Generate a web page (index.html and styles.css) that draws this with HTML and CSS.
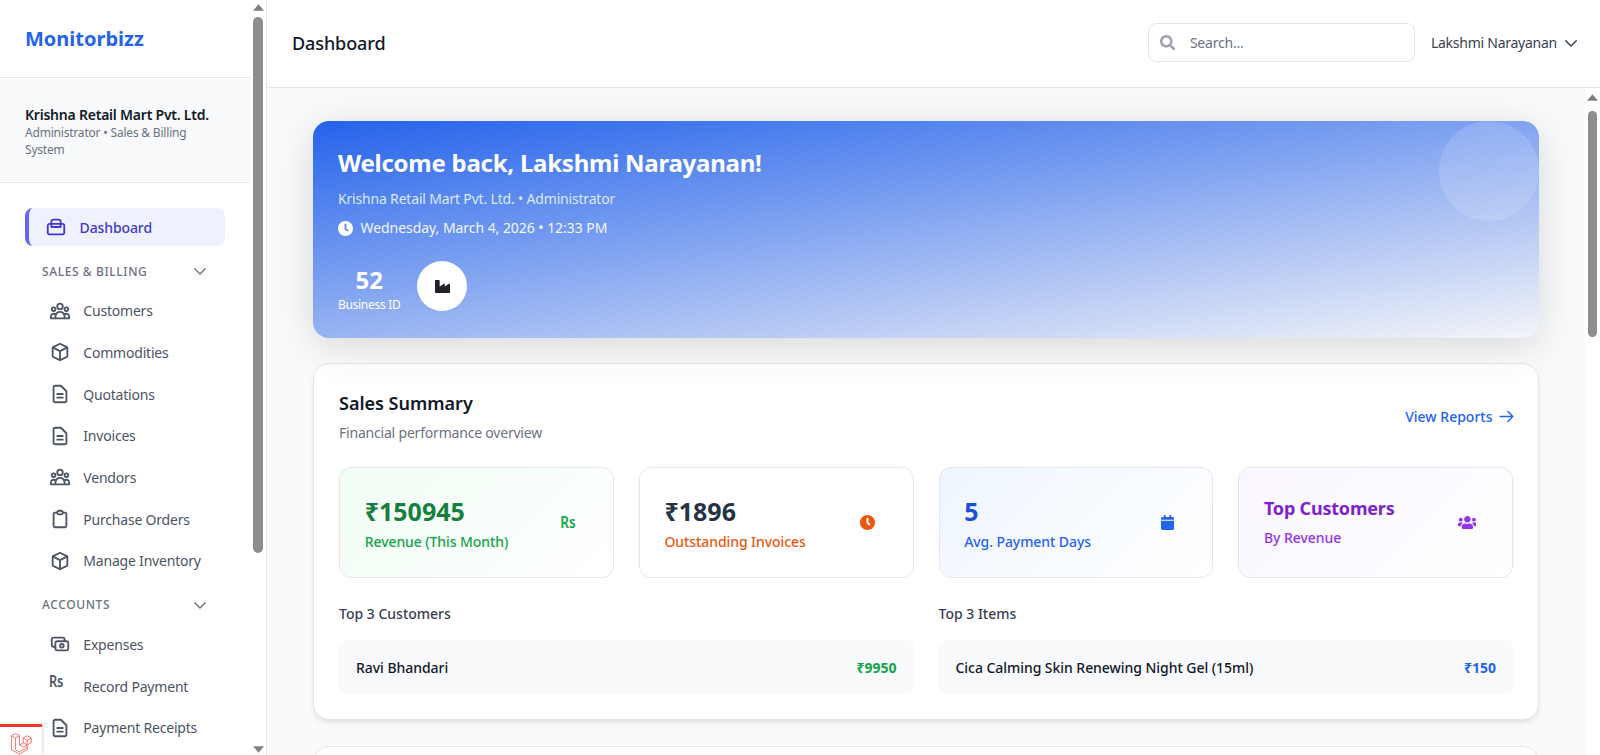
FILE: index.html
```html
<!DOCTYPE html>
<html lang="en">
<head>
<meta charset="utf-8">
<title>Dashboard</title>
<link rel="stylesheet" href="styles.css">
</head>
<body>
<div class="app">
  <aside class="sidebar">
    <div class="sidebar-body">
      <div class="brand"><span class="brand-name">Monitorbizz</span></div>
      <div class="org">
        <div class="org-name">Krishna Retail Mart Pvt. Ltd.</div>
        <div class="org-role">Administrator • Sales &amp; Billing System</div>
      </div>
      <nav class="nav">
        <a class="nav-active">
          <svg class="ico-active" viewBox="0 0 24 24"><path d="M3 10.500a2 2 0 012-2h14a2 2 0 012 2V18a2 2 0 01-2 2H5a2 2 0 01-2-2zM7 8.500V6a2 2 0 012-2h6a2 2 0 012 2v2.500M7 8.500V12h10V8.500"/></svg>
          <span>Dashboard</span>
        </a>
        <div class="nav-group"><span>SALES &amp; BILLING</span><svg class="chev" viewBox="0 0 24 24"><path d="M19 9l-7 7-7-7"/></svg></div>
        <a class="nav-item"><svg class="ico" viewBox="0 0 24 24"><path d="M17 20h5v-2a3 3 0 00-5.356-1.857M17 20H7m10 0v-2c0-.656-.126-1.283-.356-1.857M7 20H2v-2a3 3 0 015.356-1.857M7 20v-2c0-.656.126-1.283.356-1.857m0 0a5.002 5.002 0 019.288 0M15 7a3 3 0 11-6 0 3 3 0 016 0zm6 3a2 2 0 11-4 0 2 2 0 014 0zM7 10a2 2 0 11-4 0 2 2 0 014 0z"/></svg><span>Customers</span></a>
        <a class="nav-item"><svg class="ico" viewBox="0 0 24 24"><path d="M20 7l-8-4-8 4m16 0l-8 4m8-4v10l-8 4m0-10L4 7m8 4v10M4 7v10l8 4"/></svg><span>Commodities</span></a>
        <a class="nav-item"><svg class="ico" viewBox="0 0 24 24"><path d="M9 12h6m-6 4h6m2 5H7a2 2 0 01-2-2V5a2 2 0 012-2h5.586a1 1 0 01.707.293l5.414 5.414a1 1 0 01.293.707V19a2 2 0 01-2 2z"/></svg><span>Quotations</span></a>
        <a class="nav-item"><svg class="ico" viewBox="0 0 24 24"><path d="M9 12h6m-6 4h6m2 5H7a2 2 0 01-2-2V5a2 2 0 012-2h5.586a1 1 0 01.707.293l5.414 5.414a1 1 0 01.293.707V19a2 2 0 01-2 2z"/></svg><span>Invoices</span></a>
        <a class="nav-item"><svg class="ico" viewBox="0 0 24 24"><path d="M17 20h5v-2a3 3 0 00-5.356-1.857M17 20H7m10 0v-2c0-.656-.126-1.283-.356-1.857M7 20H2v-2a3 3 0 015.356-1.857M7 20v-2c0-.656.126-1.283.356-1.857m0 0a5.002 5.002 0 019.288 0M15 7a3 3 0 11-6 0 3 3 0 016 0zm6 3a2 2 0 11-4 0 2 2 0 014 0zM7 10a2 2 0 11-4 0 2 2 0 014 0z"/></svg><span>Vendors</span></a>
        <a class="nav-item"><svg class="ico" viewBox="0 0 24 24"><path d="M9 5H7a2 2 0 00-2 2v12a2 2 0 002 2h10a2 2 0 002-2V7a2 2 0 00-2-2h-2M9 5a2 2 0 002 2h2a2 2 0 002-2M9 5a2 2 0 012-2h2a2 2 0 012 2"/></svg><span>Purchase Orders</span></a>
        <a class="nav-item"><svg class="ico" viewBox="0 0 24 24"><path d="M20 7l-8-4-8 4m16 0l-8 4m8-4v10l-8 4m0-10L4 7m8 4v10M4 7v10l8 4"/></svg><span>Manage Inventory</span></a>
        <div class="nav-group"><span>ACCOUNTS</span><svg class="chev" viewBox="0 0 24 24"><path d="M19 9l-7 7-7-7"/></svg></div>
        <a class="nav-item"><svg class="ico" viewBox="0 0 24 24"><path d="M17 9V7a2 2 0 00-2-2H5a2 2 0 00-2 2v6a2 2 0 002 2h2m2 4h10a2 2 0 002-2v-6a2 2 0 00-2-2H9a2 2 0 00-2 2v6a2 2 0 002 2zm7-5a2 2 0 11-4 0 2 2 0 014 0z"/></svg><span>Expenses</span></a>
        <a class="nav-item"><span class="ico-box"><span class="ico-rs">Rs</span></span><span>Record Payment</span></a>
        <a class="nav-item"><svg class="ico" viewBox="0 0 24 24"><path d="M9 12h6m-6 4h6m2 5H7a2 2 0 01-2-2V5a2 2 0 012-2h5.586a1 1 0 01.707.293l5.414 5.414a1 1 0 01.293.707V19a2 2 0 01-2 2z"/></svg><span>Payment Receipts</span></a>
      </nav>
    </div>
    <div class="sb sb-side">
      <svg class="sb-arrow sb-arrow-top" viewBox="0 0 10 6"><path d="M5 0L10 6H0z"/></svg>
      <div class="sb-thumb sb-thumb-side"></div>
      <svg class="sb-arrow sb-arrow-bottom" viewBox="0 0 10 6"><path d="M0 0H10L5 6z"/></svg>
    </div>
  </aside>
  <div class="main">
    <header class="topbar">
      <h1 class="page-title">Dashboard</h1>
      <div class="top-right">
        <label class="search">
          <svg class="search-ico" viewBox="0 0 512 512"><path d="M505 442.7L405.3 343c-4.500-4.500-10.600-7-17-7H372c27.600-35.300 44-79.700 44-128C416 93.100 322.900 0 208 0S0 93.100 0 208s93.100 208 208 208c48.300 0 92.700-16.400 128-44v16.300c0 6.400 2.500 12.500 7 17l99.700 99.700c9.400 9.400 24.600 9.400 33.900 0l28.300-28.300c9.400-9.400 9.400-24.600.1-34zM208 336c-70.700 0-128-57.200-128-128 0-70.700 57.200-128 128-128 70.700 0 128 57.200 128 128 0 70.700-57.200 128-128 128z"/></svg>
          <span class="search-ph">Search...</span>
        </label>
        <div class="user"><span>Lakshmi Narayanan</span><svg class="user-chev" viewBox="0 0 24 24"><path d="M19 9l-7 7-7-7"/></svg></div>
      </div>
    </header>
    <div class="content-row">
      <main class="content">
        <section class="hero">
          <div class="hero-circle"></div>
          <h2 class="hero-title">Welcome back, Lakshmi Narayanan!</h2>
          <p class="hero-sub">Krishna Retail Mart Pvt. Ltd. • Administrator</p>
          <p class="hero-date"><svg class="hero-clock" viewBox="8 8 496 496"><path d="M256,8C119,8,8,119,8,256S119,504,256,504,504,393,504,256,393,8,256,8Zm92.490,313h0l-20,25a16,16,0,0,1-22.490,2.500h0l-67-49.720a40,40,0,0,1-15-31.230V112a16,16,0,0,1,16-16h32a16,16,0,0,1,16,16V256l58,42.500A16,16,0,0,1,348.490,321Z"/></svg><span>Wednesday, March 4, 2026 • 12:33 PM</span></p>
          <div class="hero-stats">
            <div class="hero-id"><div class="hero-num">52</div><div class="hero-label">Business ID</div></div>
            <div class="hero-badge"><svg class="hero-factory" viewBox="0 0 512 512"><path d="M475.115 163.781L336 252.309v-68.280c0-18.916-20.931-30.399-36.885-20.248L160 252.309V56c0-13.255-10.745-24-24-24H24C10.745 32 0 42.745 0 56v400c0 13.255 10.745 24 24 24h464c13.255 0 24-10.745 24-24V184.029c0-18.917-20.931-30.399-36.885-20.248z"/></svg></div>
          </div>
        </section>
        <section class="card">
          <div class="card-head">
            <div>
              <h3 class="card-title">Sales Summary</h3>
              <p class="card-sub">Financial performance overview</p>
            </div>
            <a class="card-link"><span>View Reports</span><svg class="arrow" viewBox="0 0 24 24"><path d="M14 5l7 7m0 0l-7 7m7-7H3"/></svg></a>
          </div>
          <div class="stats">
            <div class="stat stat-green">
              <div class="stat-text"><div class="stat-value c-green-dark">₹150945</div><div class="stat-label c-green">Revenue (This Month)</div></div>
              <div class="stat-icon"><span class="stat-rs c-green">Rs</span></div>
            </div>
            <div class="stat stat-white">
              <div class="stat-text"><div class="stat-value c-slate">₹1896</div><div class="stat-label c-orange">Outstanding Invoices</div></div>
              <div class="stat-icon"><svg class="ico-clock c-orange" viewBox="8 8 496 496"><path d="M256,8C119,8,8,119,8,256S119,504,256,504,504,393,504,256,393,8,256,8Zm92.490,313h0l-20,25a16,16,0,0,1-22.490,2.500h0l-67-49.720a40,40,0,0,1-15-31.230V112a16,16,0,0,1,16-16h32a16,16,0,0,1,16,16V256l58,42.500A16,16,0,0,1,348.490,321Z"/></svg></div>
            </div>
            <div class="stat stat-blue">
              <div class="stat-text"><div class="stat-value c-blue-dark">5</div><div class="stat-label c-blue">Avg. Payment Days</div></div>
              <div class="stat-icon"><svg class="ico-cal c-blue" viewBox="0 0 448 512"><path d="M12 192h424c6.600 0 12 5.400 12 12v260c0 26.500-21.500 48-48 48H48c-26.500 0-48-21.500-48-48V204c0-6.600 5.400-12 12-12zm436-44v-36c0-26.500-21.500-48-48-48h-48V12c0-6.600-5.400-12-12-12h-40c-6.600 0-12 5.400-12 12v52H160V12c0-6.600-5.400-12-12-12h-40c-6.600 0-12 5.400-12 12v52H48C21.500 64 0 85.500 0 112v36c0 6.600 5.400 12 12 12h424c6.600 0 12-5.400 12-12z"/></svg></div>
            </div>
            <div class="stat stat-purple">
              <div class="stat-text-alt"><div class="stat-title c-purple-dark">Top Customers</div><div class="stat-label2 c-purple">By Revenue</div></div>
              <div class="stat-icon"><svg class="ico-users c-purple" viewBox="0 0 640 512"><path d="M96 224c35.300 0 64-28.700 64-64s-28.700-64-64-64-64 28.700-64 64 28.700 64 64 64zm448 0c35.300 0 64-28.700 64-64s-28.700-64-64-64-64 28.700-64 64 28.700 64 64 64zm32 32h-64c-17.600 0-33.500 7.100-45.100 18.600 40.300 22.100 68.900 62 75.100 109.400h66c17.700 0 32-14.300 32-32v-32c0-35.300-28.700-64-64-64zm-256 0c61.900 0 112-50.100 112-112S381.900 32 320 32 208 82.100 208 144s50.100 112 112 112zm76.800 32h-8.300c-20.800 10-43.900 16-68.500 16s-47.600-6-68.500-16h-8.300C179.600 288 128 339.600 128 403.200V432c0 26.500 21.500 48 48 48h288c26.500 0 48-21.500 48-48v-28.800c0-63.600-51.600-115.200-115.200-115.200zm-223.700-13.400C161.500 263.100 145.600 256 128 256H64c-35.300 0-64 28.700-64 64v32c0 17.700 14.300 32 32 32h65.900c6.300-47.400 34.900-87.300 75.200-109.400z"/></svg></div>
            </div>
          </div>
          <div class="tops">
            <div>
              <h4 class="top-title">Top 3 Customers</h4>
              <div class="top-row"><span>Ravi Bhandari</span><span class="top-val c-green">₹9950</span></div>
            </div>
            <div>
              <h4 class="top-title">Top 3 Items</h4>
              <div class="top-row"><span>Cica Calming Skin Renewing Night Gel (15ml)</span><span class="top-val c-blue">₹150</span></div>
            </div>
          </div>
        </section>
        <section class="card card-next"></section>
      </main>
      <div class="sb sb-main">
        <svg class="sb-arrow sb-arrow-main" viewBox="0 0 10 6"><path d="M5 0L10 6H0z"/></svg>
        <div class="sb-thumb sb-thumb-main"></div>
      </div>
    </div>
  </div>
</div>
<div class="debug-tab">
  <svg class="debug-logo" viewBox="0 0 50 52"><path d="M1 6.300L10.600 .8l9.600 5.500v22l8.800-5V11.800l9.600-5.500 9.600 5.500v11l-9.400 5.400v11l-19 11L1 39.300zM1 6.300l9.600 5.500 9.600-5.500M10.600 11.800v27.500l9.200 5.400 19.200-11M20.200 28.300l9.200 5.200 9.200-5.300M29 11.800l9.600 5.500 9.600-5.500M38.600 17.300v10.900M29 22.800l9.600 5.400"/></svg>
</div>
</body>
</html>
```

FILE: styles.css
```css
* { box-sizing: border-box; }
html, body { margin: 0; height: 100%; overflow: hidden; }
body { font-family: "Noto Sans", "Open Sans", sans-serif; color: #111827; background: #fff; letter-spacing: -.2px; }
h1, h2, h3, h4, p { margin: 0; font-weight: inherit; font-size: inherit; }
a { color: inherit; text-decoration: none; }
svg { display: block; flex: none; }

.app { display: flex; height: 755px; }

.sb { flex: none; display: flex; flex-direction: column; align-items: center; background: #fff; }
.sb-side { width: 16px; }
.sb-main { width: 15px; }
.sb-arrow { width: 11px; height: 7px; fill: #808080; }
.sb-arrow-top { margin-top: 3.500px; }
.sb-arrow-bottom { margin-top: auto; margin-bottom: 2px; }
.sb-arrow-main { margin-top: 5.500px; }
.sb-thumb { width: 9.500px; background: #8e8e8e; border-radius: 5px; }
.sb-thumb-side { height: 536px; margin-top: 6.500px; }
.sb-thumb-main { height: 226px; margin-top: 10.500px; }

.sidebar { width: 267px; flex: none; display: flex; border-right: 1px solid #e5e7eb; background: #fff; }
.sidebar-body { flex: 1; min-width: 0; overflow: hidden; }
.brand { height: 78px; padding: 0 25px; display: flex; align-items: center; border-bottom: 1px solid #e5e7eb; }
.brand-name { font-size: 20px; font-weight: 700; color: #2563eb; letter-spacing: 0; }
.org { background: #f9fafb; padding: 27px 25px 23px; height: 105px; border-bottom: 1px solid #e5e7eb; }
.org-name { font-size: 14px; font-weight: 600; color: #111827; line-height: 20px; letter-spacing: -.22px; }
.org-role { font-size: 12px; color: #6b7280; line-height: 17px; margin-top: -1px; }
.nav { padding: 25px 25px 0; }
.nav-active { display: flex; align-items: center; gap: 12.500px; height: 38px; width: 200px; padding-left: 16px; background: #eef2ff; border-left: 4px solid #6366f1; border-radius: 8px; color: #4338ca; font-size: 14px; font-weight: 500; letter-spacing: -.1px; margin-bottom: 4px; }
.ico-active { width: 22px; height: 22px; fill: none; stroke: #4338ca; stroke-width: 2; stroke-linecap: round; stroke-linejoin: round; }
.nav-group { display: flex; justify-content: space-between; align-items: center; height: 40px; margin-top: 2px; padding: 2px 16px 0 17px; width: 200px; font-size: 12px; font-weight: 500; letter-spacing: .6px; color: #6b7280; }
.chev { width: 18px; height: 18px; fill: none; stroke: #6b7280; stroke-width: 1.800; stroke-linecap: round; stroke-linejoin: round; }
.nav-item { display: flex; align-items: center; gap: 12px; height: 41.670px; padding-left: 24.300px; font-size: 14px; color: #4b5563; }
.ico { width: 22px; height: 22px; fill: none; stroke: #4b5563; stroke-width: 2; stroke-linecap: round; stroke-linejoin: round; }
.ico-box { width: 22px; flex: none; display: flex; }
.ico-rs { display: block; font-size: 16px; line-height: 16px; font-weight: 600; color: #4b5563; transform: translateY(-5px) scaleX(.8); transform-origin: left center; }

.main { flex: 1; min-width: 0; display: flex; flex-direction: column; background: #f9fafb; }
.topbar { height: 88px; flex: none; background: #fff; border-bottom: 1px solid #e5e7eb; display: flex; align-items: center; justify-content: space-between; padding: 0 20px 2px 25px; }
.page-title { font-size: 18px; font-weight: 500; color: #111827; letter-spacing: -.1px; }
.top-right { display: flex; align-items: center; gap: 16px; }
.search { width: 267px; height: 39px; display: flex; align-items: center; gap: 14.500px; padding-left: 11px; background: #fff; border: 1px solid #e5e7eb; border-radius: 8px; }
.search-ico { width: 15.500px; height: 15.500px; fill: #9ca3af; }
.search-ph { font-size: 14px; color: #6b7280; }
.user { display: flex; align-items: center; gap: 5px; font-size: 14px; color: #374151; letter-spacing: -.25px; }
.user-chev { width: 18px; height: 18px; fill: none; stroke: #374151; stroke-width: 2; stroke-linecap: round; stroke-linejoin: round; }

.content-row { flex: 1; min-height: 0; display: flex; }
.content { flex: 1; min-width: 0; overflow: hidden; padding: 33px 46px 24px; background: #f9fafb; }
.hero { position: relative; height: 217px; padding: 24px 25px; border-radius: 16px; color: #fff; background: linear-gradient(172deg, #2563eb 0%, #f3f4f8 100%); box-shadow: 0 8px 40px rgba(0,0,0,.14); overflow: hidden; }
.hero-circle { position: absolute; top: 0; right: 0; width: 100px; height: 100px; border-radius: 50%; background: rgba(255,255,255,.14); }
.hero-title { font-size: 24px; font-weight: 700; line-height: 36px; letter-spacing: -.25px; }
.hero-sub { font-size: 14px; color: #dbeafe; line-height: 20px; margin-top: 8px; letter-spacing: -.18px; }
.hero-date { display: flex; align-items: center; gap: 7.500px; font-size: 14px; line-height: 20px; margin-top: 9px; color: #f3f6fe; letter-spacing: -.05px; }
.hero-clock { width: 15px; height: 15px; fill: #fff; }
.hero-stats { display: flex; align-items: flex-start; gap: 17px; margin-top: 23px; }
.hero-id { text-align: center; padding-top: 3px; }
.hero-num { font-size: 24px; font-weight: 700; line-height: 32px; letter-spacing: 0; }
.hero-label { font-size: 12px; line-height: 16px; letter-spacing: -.3px; margin-top: 1px; }
.hero-badge { width: 50px; height: 50px; border-radius: 50%; background: #fff; display: flex; align-items: center; justify-content: center; }
.hero-factory { width: 15px; height: 15px; fill: #1f2328; }

.card { margin-top: 25px; background: #fff; border: 1px solid #e5e7eb; border-radius: 16px; padding: 25px; box-shadow: 0 4px 6px -1px rgba(0,0,0,.08), 0 2px 4px -1px rgba(0,0,0,.04); }
.card-head { display: flex; justify-content: space-between; align-items: center; }
.card-title { font-size: 18px; font-weight: 600; color: #111827; line-height: 28px; letter-spacing: 0; }
.card-sub { font-size: 14px; color: #6b7280; line-height: 20px; margin-top: 6px; }
.card-link { display: flex; align-items: center; gap: 5px; margin-right: -1.500px; font-size: 14px; font-weight: 500; color: #2563eb; letter-spacing: 0; }
.arrow { width: 17px; height: 17px; fill: none; stroke: #2563eb; stroke-width: 2; stroke-linecap: round; stroke-linejoin: round; }
.stats { display: grid; grid-template-columns: repeat(4, 1fr); gap: 25px; margin-top: 24px; }
.stat { height: 110.500px; display: flex; align-items: center; justify-content: space-between; padding: 0 25px 0 24.700px; border: 1px solid #e5e7eb; border-radius: 12px; }
.stat-text { padding-top: 3px; }
.stat-text-alt { padding-bottom: 2px; }
.stat-icon { width: 40px; flex: none; display: flex; align-items: center; justify-content: center; }
.stat-green { background: linear-gradient(135deg, #f0fdf4, #fff); }
.stat-white { background: #fff; }
.stat-blue { background: linear-gradient(135deg, #eff6ff, #fff); }
.stat-purple { background: linear-gradient(135deg, #faf5ff, #fff); }
.stat-value { font-size: 25px; font-weight: 700; line-height: 32px; letter-spacing: 0; }
.stat-label { font-size: 14px; font-weight: 500; line-height: 20px; margin-top: 5px; letter-spacing: -.08px; }
.stat-title { font-size: 18px; font-weight: 700; line-height: 28px; letter-spacing: -.2px; }
.stat-label2 { font-size: 14px; font-weight: 500; line-height: 20px; margin-top: 6px; letter-spacing: -.05px; }
.stat-rs { display: block; font-size: 16px; line-height: 16px; font-weight: 600; transform: scaleX(.85); }
.ico-clock { width: 15px; height: 15px; fill: currentColor; }
.ico-cal { width: 13.100px; height: 15px; fill: currentColor; }
.ico-users { width: 18.750px; height: 15px; fill: currentColor; }
.c-green { color: #16a34a; }
.c-green-dark { color: #15803d; }
.c-slate { color: #243244; }
.c-orange { color: #ea580c; }
.c-blue { color: #2563eb; }
.c-blue-dark { color: #1d4ed8; }
.c-purple { color: #9333ea; }
.c-purple-dark { color: #7e22ce; }
.tops { display: grid; grid-template-columns: 1fr 1fr; gap: 25px; margin-top: 26.500px; }
.top-title { font-size: 14px; font-weight: 500; color: #374151; line-height: 20px; letter-spacing: 0; }
.top-row { display: flex; justify-content: space-between; align-items: center; height: 53.500px; margin-top: 16px; padding: 2px 17px 0; background: #f9fafb; border-radius: 8px; font-size: 14px; font-weight: 500; color: #111827; letter-spacing: -.05px; }
.top-val { font-weight: 700; letter-spacing: 0; }
.card-next { height: 400px; margin-top: 26px; }

.debug-tab { position: absolute; left: 0; top: 724px; width: 42px; height: 31px; padding-top: 6px; background: #fff; border-top: 3px solid #f4362e; box-shadow: 1px 0 2px rgba(0,0,0,.15); display: flex; justify-content: center; }
.debug-logo { width: 21px; height: 22px; fill: none; stroke: #f56a5f; stroke-width: 2.200; stroke-linejoin: round; }
```
